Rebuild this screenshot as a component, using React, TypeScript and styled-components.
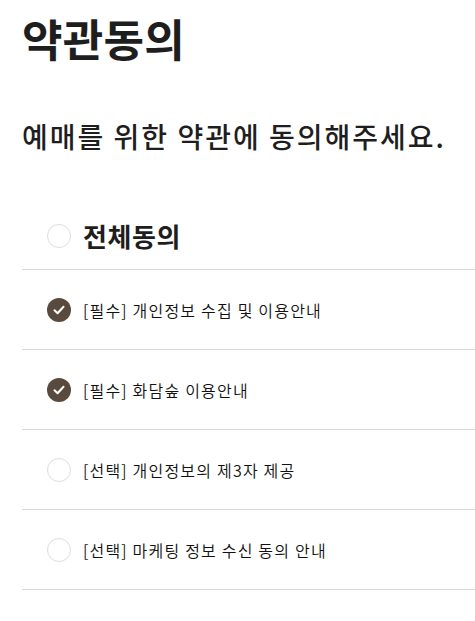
import * as React from 'react';
import styled, { createGlobalStyle } from 'styled-components';

const GlobalStyle = createGlobalStyle`
	html, body {
		margin: 0;
		padding: 0;
		background: #ffffff;
	}
	body {
		font-family: 'Noto Sans CJK KR', 'Noto Sans', sans-serif;
		color: #222222;
	}
`;

type Term = {
	tag: string;
	label: string;
	checked: boolean;
};

const terms: Term[] = [
	{ tag: '필수', label: '개인정보 수집 및 이용안내', checked: true },
	{ tag: '필수', label: '화담숲 이용안내', checked: true },
	{ tag: '선택', label: '개인정보의 제3자 제공', checked: false },
	{ tag: '선택', label: '마케팅 정보 수신 동의 안내', checked: false },
];

const CheckCircle: React.FC<{ checked: boolean }> = ({ checked }) => (
	<CheckBox $checked={checked}>
		{checked && (
			<svg width="12" height="10" viewBox="0 0 12 10" fill="none">
				<path d="M1.5 5.2 L4.6 8.2 L10.5 1.8" stroke="#ffffff" strokeWidth="2" strokeLinecap="round" strokeLinejoin="round" />
			</svg>
		)}
	</CheckBox>
);

const App: React.FC = () => {
	return (
		<>
			<GlobalStyle />
			<AgreeWrap>
				<Title>약관동의</Title>
				<SubTitle>예매를 위한 약관에 동의해주세요.</SubTitle>
				<AgreeList>
					<AllRow>
						<CheckCircle checked={false} />
						<AllLabel>전체동의</AllLabel>
					</AllRow>
					{terms.map((t) => (
						<TermRow key={t.label}>
							<CheckCircle checked={t.checked} />
							<TermLabel>
								[{t.tag}] {t.label}
							</TermLabel>
						</TermRow>
					))}
				</AgreeList>
			</AgreeWrap>
		</>
	);
};

const AgreeWrap = styled.div`
	padding: 0 0 0 22px;
	overflow: hidden;
`;

const Title = styled.h1`
	margin: 0;
	padding-top: 9px;
	font-size: 44px;
	font-weight: 700;
	line-height: 58px;
	letter-spacing: 0.3px;
	color: #1e1e1e;
`;

const SubTitle = styled.p`
	margin: 50px 0 0 0;
	font-size: 28px;
	font-weight: 500;
	line-height: 38px;
	letter-spacing: 2px;
	color: #1e1e1e;
`;

const AgreeList = styled.ul`
	list-style: none;
	margin: 47px 0 0 0;
	padding: 0;
`;

const Row = styled.li`
	display: flex;
	align-items: center;
	gap: 12px;
	padding-left: 25px;
	border-bottom: 1px solid #d9d9d9;
`;

const AllRow = styled(Row)`
	height: 67px;
`;

const TermRow = styled(Row)`
	height: 79px;
`;

const CheckBox = styled.span<{ $checked: boolean }>`
	display: flex;
	align-items: center;
	justify-content: center;
	flex: none;
	width: 24px;
	height: 24px;
	border-radius: 50%;
	box-sizing: border-box;
	background: ${({ $checked }) => ($checked ? '#5a4a3e' : '#ffffff')};
	border: ${({ $checked }) => ($checked ? 'none' : '1px solid #dcdcdc')};
`;

const AllLabel = styled.span`
	font-size: 26px;
	font-weight: 700;
	line-height: 30px;
	letter-spacing: 0.6px;
	color: #1e1e1e;
`;

const TermLabel = styled.span`
	font-size: 16px;
	font-weight: 350;
	letter-spacing: 1.2px;
	color: #111111;
`;

export default App;
